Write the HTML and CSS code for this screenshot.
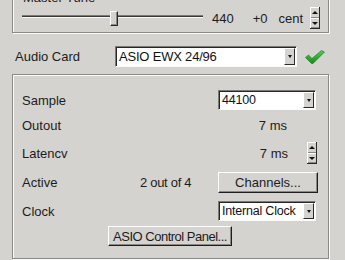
FILE: index.html
```html
<!DOCTYPE html>
<html>
<head>
<meta charset="utf-8">
<link rel="stylesheet" href="styles.css">
</head>
<body>
<div class="window">
  <div class="group tune">
    <span class="legend">Master Tune</span>
    <div class="tune-row">
      <div class="slider"><div class="track"></div><div class="thumb"></div></div>
      <span class="hz">440</span>
      <span class="offset">+0</span>
      <span class="unit">cent</span>
      <div class="spin"><span class="up"><i></i></span><span class="down"><i></i></span></div>
    </div>
  </div>

  <div class="card-row">
    <span class="card-label">Audio Card</span>
    <div class="combo card-combo"><span class="value">ASIO EWX 24/96</span><span class="drop"><i></i></span></div>
    <svg class="check" width="20" height="14" viewBox="0 0 20 14">
      <defs>
        <linearGradient id="g" x1="0" y1="0" x2="0" y2="1">
          <stop offset="0" stop-color="#4fd24f"/>
          <stop offset="1" stop-color="#0e8f18"/>
        </linearGradient>
      </defs>
      <path d="M0.5 7.5 L3.5 5 L7 8.5 L16.5 0.5 L19.5 2 L8 13.5 L6.5 13.5 Z" fill="url(#g)" stroke="#17701c" stroke-width="0.6"/>
    </svg>
  </div>

  <div class="group driver">
    <div class="grid">
      <span class="lbl">Sample</span>
      <span></span>
      <div class="combo"><span class="value">44100</span><span class="drop"><i></i></span></div>

      <span class="lbl">Outout</span>
      <span></span>
      <span class="ms">7 ms</span>

      <span class="lbl">Latencv</span>
      <span></span>
      <div class="lat"><span>7 ms</span><div class="spin"><span class="up"><i></i></span><span class="down"><i></i></span></div></div>

      <span class="lbl">Active</span>
      <span class="count">2 out of 4</span>
      <div class="btn channels">Channels...</div>

      <span class="lbl">Clock</span>
      <span></span>
      <div class="combo"><span class="value">Internal Clock</span><span class="drop"><i></i></span></div>
    </div>
    <div class="btn asio">ASIO Control Panel...</div>
  </div>
</div>
</body>
</html>
```

FILE: styles.css
```css
html, body {
  margin: 0;
  padding: 0;
}
body {
  background: #d4d3cf;
  font-family: "Liberation Sans", Arial, sans-serif;
  font-size: 13px;
  color: #1c1c1c;
  width: 345px;
  height: 260px;
  overflow: hidden;
}
.window {
  padding: 0 16px 0 12px;
}
.group {
  position: relative;
  border: 1px solid #8c8a86;
  box-shadow: inset 1px 1px #fbfbfa, 1px 1px #fbfbfa;
}
.tune {
  margin-top: -2px;
  padding: 7px 0 2px 9px;
}
.legend {
  position: absolute;
  left: 8px;
  top: -9px;
  padding: 0 2px;
  background: #d4d3cf;
  line-height: 15px;
}
.tune-row {
  display: flex;
  align-items: center;
  height: 24px;
}
.slider {
  position: relative;
  width: 181px;
  height: 24px;
}
.track {
  position: absolute;
  left: 0;
  right: 0;
  top: 9px;
  height: 1px;
  background: #3a3a3a;
  border-top: 1px solid #7a7a7a;
  border-bottom: 1px solid #fbfbfa;
}
.thumb {
  position: absolute;
  left: 88px;
  top: 5px;
  width: 8px;
  height: 15px;
  box-sizing: border-box;
  background: #d4d3cf;
  border-top: 1px solid #fff;
  border-left: 1px solid #fff;
  border-right: 1px solid #2a2a2a;
  border-bottom: 1px solid #2a2a2a;
  box-shadow: inset -1px -1px #8a8884;
}
.hz {
  margin-left: 9px;
}
.offset {
  margin-left: 19px;
}
.unit {
  margin-left: 11px;
}
.spin {
  display: flex;
  flex-direction: column;
  width: 10px;
  height: 22px;
  box-sizing: border-box;
  border-right: 1px solid #2a2a2a;
  border-bottom: 1px solid #2a2a2a;
}
.tune-row .spin {
  margin-left: 7px;
}
.spin span {
  flex: 1;
  display: flex;
  align-items: center;
  justify-content: center;
  border-top: 1px solid #fff;
  border-left: 1px solid #fff;
  box-shadow: inset 0 -1px #8a8884;
}
.spin .up i {
  border-left: 3px solid transparent;
  border-right: 3px solid transparent;
  border-bottom: 3px solid #111;
}
.spin .down i {
  border-left: 3px solid transparent;
  border-right: 3px solid transparent;
  border-top: 3px solid #111;
}
.card-row {
  display: flex;
  align-items: center;
  margin-top: 13px;
  height: 21px;
  padding-left: 3px;
}
.card-label {
  width: 100px;
}
.combo {
  display: flex;
  box-sizing: border-box;
  height: 20px;
  background: #fff;
  border: 1px solid;
  border-color: #7c7a76 #fbfbfa #fbfbfa #7c7a76;
  box-shadow: inset 1px 1px #262626;
  padding: 1px;
  white-space: nowrap;
}
.card-combo {
  width: 182px;
  height: 21px;
}
.combo .value {
  flex: 1;
  min-width: 0;
  overflow: hidden;
  display: flex;
  align-items: center;
  padding-left: 2px;
  color: #111;
  letter-spacing: -0.2px;
}
.combo .drop {
  flex: none;
  width: 11px;
  display: flex;
  align-items: center;
  justify-content: center;
  background: #d4d3cf;
  box-sizing: border-box;
  border-top: 1px solid #fff;
  border-left: 1px solid #fff;
  border-right: 1px solid #2a2a2a;
  border-bottom: 1px solid #2a2a2a;
}
.combo .drop i {
  border-left: 2px solid transparent;
  border-right: 2px solid transparent;
  border-top: 3px solid #111;
}
.check {
  margin-left: 8px;
}
.driver {
  margin-top: 7px;
  padding: 14px 0 12px 9px;
}
.grid {
  display: grid;
  grid-template-columns: 118px 78px 100px;
  grid-template-rows: 22px 28px 28px 30px 28px;
  align-items: center;
}
.grid .combo {
  width: 98px;
}
.grid .combo .value {
  font-size: 12.5px;
}
.ms {
  text-align: right;
  padding-right: 31px;
}
.lat {
  display: flex;
  align-items: center;
  justify-content: flex-end;
  padding-right: 1px;
}
.lat .spin {
  margin-left: 19px;
}
.count {
  letter-spacing: -0.3px;
}
.btn {
  box-sizing: border-box;
  display: flex;
  align-items: center;
  justify-content: center;
  white-space: nowrap;
  background: #d4d3cf;
  border-top: 1px solid #fff;
  border-left: 1px solid #fff;
  border-right: 1px solid #1e1e1e;
  border-bottom: 1px solid #1e1e1e;
  box-shadow: inset -1px -1px #8a8884;
}
.channels {
  width: 100px;
  height: 21px;
}
.asio {
  margin: 1px 0 0 86px;
  width: 124px;
  height: 20px;
  font-size: 13px;
  letter-spacing: -0.5px;
}
```
